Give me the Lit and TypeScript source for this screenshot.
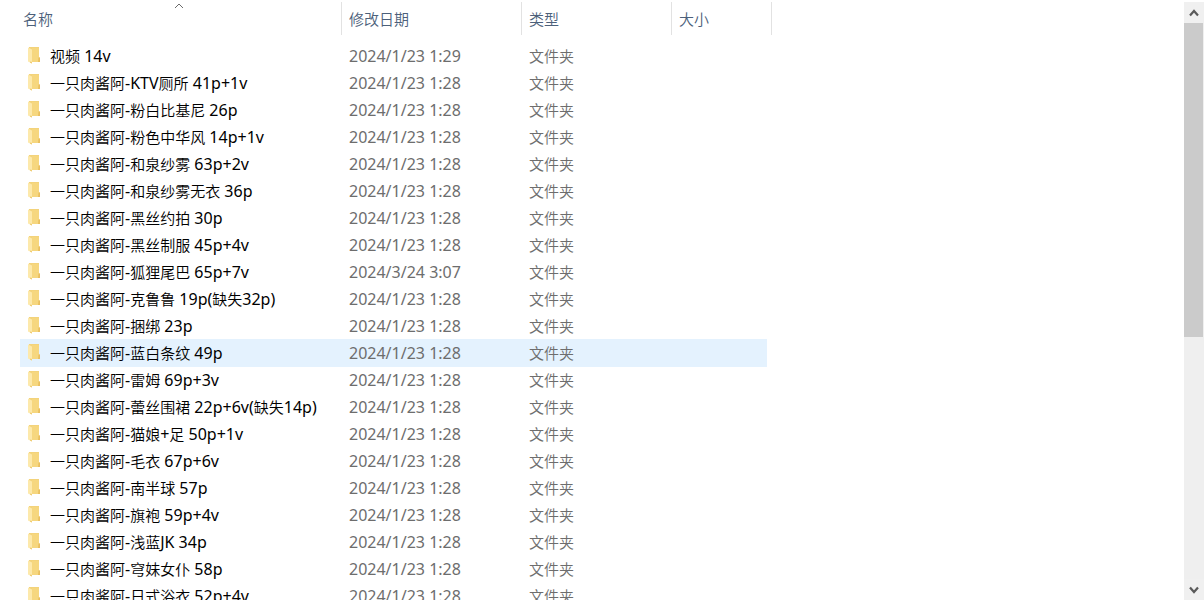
import { LitElement, html, css, svg } from "lit";
import { customElement, property, state } from "lit/decorators.js";

interface Entry {
  name: string;
  modified: string;
}

const DEFAULT_DATE = "2024/1/23 1:28";

const entry = (name: string, modified = DEFAULT_DATE): Entry => ({ name, modified });

const ENTRIES: Entry[] = [
  entry("视频 14v", "2024/1/23 1:29"),
  entry("一只肉酱阿-KTV厕所 41p+1v"),
  entry("一只肉酱阿-粉白比基尼 26p"),
  entry("一只肉酱阿-粉色中华风 14p+1v"),
  entry("一只肉酱阿-和泉纱雾 63p+2v"),
  entry("一只肉酱阿-和泉纱雾无衣 36p"),
  entry("一只肉酱阿-黑丝约拍 30p"),
  entry("一只肉酱阿-黑丝制服 45p+4v"),
  entry("一只肉酱阿-狐狸尾巴 65p+7v", "2024/3/24 3:07"),
  entry("一只肉酱阿-克鲁鲁 19p(缺失32p)"),
  entry("一只肉酱阿-捆绑 23p"),
  entry("一只肉酱阿-蓝白条纹 49p"),
  entry("一只肉酱阿-雷姆 69p+3v"),
  entry("一只肉酱阿-蕾丝围裙 22p+6v(缺失14p)"),
  entry("一只肉酱阿-猫娘+足 50p+1v"),
  entry("一只肉酱阿-毛衣 67p+6v"),
  entry("一只肉酱阿-南半球 57p"),
  entry("一只肉酱阿-旗袍 59p+4v"),
  entry("一只肉酱阿-浅蓝JK 34p"),
  entry("一只肉酱阿-穹妹女仆 58p"),
  entry("一只肉酱阿-日式浴衣 52p+4v"),
];

@customElement("folder-icon")
class FolderIcon extends LitElement {
  static styles = css`
    :host { display: block; }
    svg { display: block; }
  `;

  render() {
    return html`<svg width="12" height="17" viewBox="0 0 12 17" aria-hidden="true">
      <path d="M1 0H11V10.5H12V15H3L1 14Z" fill="#f3d37b"></path>
      <path d="M4 1H11V15H4Z" fill="#f6d77f"></path>
      <path d="M10.5 10.5H12V15H10Z" fill="#e9bf60"></path>
      <path d="M0 0.5L4 2.5V16.5L0 14.5Z" fill="#fde9ab"></path>
      <path d="M2 14.5L4 15V16.5L2 15.8Z" fill="#efcc74"></path>
    </svg>`;
  }
}

@customElement("scroll-rail")
class ScrollRail extends LitElement {
  @property({ type: Number }) portion = 56.5;

  static styles = css`
    :host {
      display: flex;
      flex-direction: column;
      width: 20px;
      padding-top: 2px;
      box-sizing: border-box;
      background: linear-gradient(#fff 2px, #efefef 2px);
    }
    .step {
      display: flex;
      align-items: center;
      justify-content: center;
      height: 21px;
      flex: none;
      margin: 0;
      padding: 0;
      border: 0;
      background: #f0f0f0;
    }
    .track { flex: 1; }
    .thumb { width: 19px; background: #cbcbcb; }
    svg { display: block; }
  `;

  private arrow(points: string) {
    return svg`<svg width="10" height="8" viewBox="0 0 10 8" aria-hidden="true">
      <polyline points=${points} fill="none" stroke="#5a5a5a" stroke-width="2.2"></polyline>
    </svg>`;
  }

  render() {
    return html`
      <button class="step" type="button" aria-label="向上滚动">${this.arrow("1,6.5 5,2 9,6.5")}</button>
      <div class="track"><div class="thumb" style="height:${this.portion}%"></div></div>
      <button class="step" type="button" aria-label="向下滚动">${this.arrow("1,1.5 5,6 9,1.5")}</button>
    `;
  }
}

@customElement("app-root")
class AppRoot extends LitElement {
  @state() private current = 11;

  static styles = css`
    :host {
      display: flex;
      height: 100vh;
      overflow: hidden;
      background: #fff;
      color: #000;
      font: 350 15px/28px "Noto Sans CJK SC", sans-serif;
    }
    .pane {
      flex: 1;
      min-width: 0;
      overflow: hidden;
      padding-left: 20px;
    }
    .list { display: block; }
    .head, .body { display: block; }
    .row {
      display: grid;
      grid-template-columns: 322px 180px 150px 100px;
      width: fit-content;
    }
    .head { padding-top: 2px; margin-bottom: 7px; }
    .title {
      padding: 0;
      border-right: 1px solid #e2e2e2;
      font-weight: inherit;
    }
    .sort {
      display: grid;
      align-items: center;
      width: 100%;
      height: 33px;
      margin: 0;
      padding: 0 0 0 7px;
      border: 0;
      background: none;
      color: #4c607a;
      font: inherit;
      line-height: 27px;
      text-align: left;
    }
    .title:first-child .sort { padding: 0 7px 0 3px; }
    .sort > * { grid-area: 1 / 1; }
    .mark { align-self: start; justify-self: center; }
    .body .row {
      grid-template-columns: 322px 180px 150px 95px;
      height: 28px;
      margin-bottom: -1px;
    }
    .current { background: #e4f2fe; }
    .cell { padding: 0 0 0 7px; color: #6d6d6d; white-space: nowrap; }
    .name {
      display: flex;
      gap: 10px;
      padding-left: 8px;
      color: #000;
    }
    .latin { font-family: "Noto Sans", sans-serif; font-size: 16px; font-weight: 400; }
    .name folder-icon { padding-top: 5px; }
  `;

  private heading(label: string, sorted = false) {
    return html`<th class="title" scope="col">
      <button class="sort" type="button">
        <span>${label}</span>
        ${sorted
          ? html`<svg class="mark" width="10" height="10" viewBox="0 0 10 10" aria-hidden="true">
              <path d="M1 6L5 2L9 6" fill="none" stroke="#6a6a6a"></path>
            </svg>`
          : ""}
      </button>
    </th>`;
  }

  /* Latin letters and digits run one size above the Chinese characters. */
  private mixed(text: string) {
    return text
      .split(/([\x20-\x7e]+)/)
      .filter(Boolean)
      .map((run) => (/^[\x20-\x7e]/.test(run) ? html`<span class="latin">${run}</span>` : run));
  }

  render() {
    return html`
      <main class="pane">
        <table class="list">
          <thead class="head">
            <tr class="row">
              ${this.heading("名称", true)} ${this.heading("修改日期")}
              ${this.heading("类型")} ${this.heading("大小")}
            </tr>
          </thead>
          <tbody class="body">
            ${ENTRIES.map(
              (e, i) => html`<tr
                class="row ${i === this.current ? "current" : ""}"
                @mouseenter=${() => (this.current = i)}
              >
                <td class="cell name"><folder-icon></folder-icon><span>${this.mixed(e.name)}</span></td>
                <td class="cell">${this.mixed(e.modified)}</td>
                <td class="cell">文件夹</td>
                <td class="cell"></td>
              </tr>`
            )}
          </tbody>
        </table>
      </main>
      <scroll-rail></scroll-rail>
    `;
  }
}
